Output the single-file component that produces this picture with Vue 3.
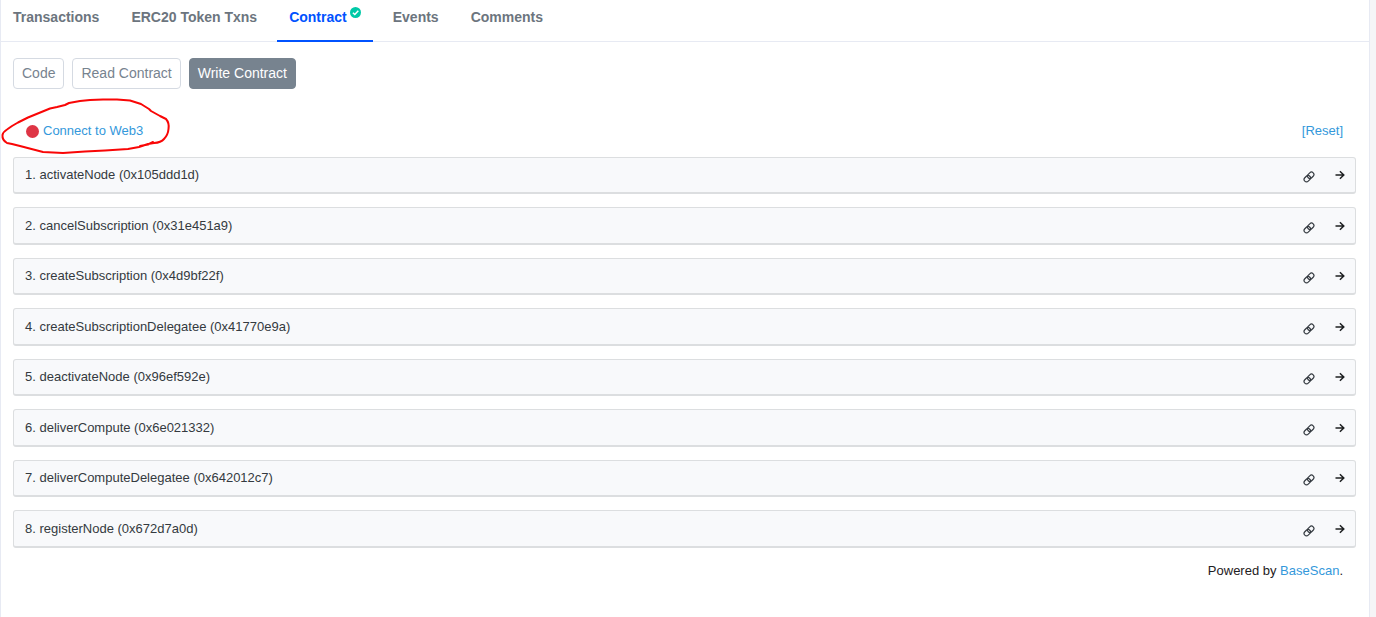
<template>
  <div class="page">
    <main class="card">
      <nav class="tabs">
        <a
          v-for="tab in tabs"
          :key="tab.name"
          href="#"
          class="tab"
          :class="{ 'tab--active': activeTab === tab.name }"
          @click.prevent="activeTab = tab.name"
        >
          {{ tab.name }}
          <svg v-if="tab.verified" class="tab__badge" viewBox="0 0 11 11" aria-hidden="true">
            <circle cx="5.5" cy="5.5" r="5.5" fill="#00c9a7" />
            <path d="M2.9 5.7 4.8 7.5 8.3 3.8" fill="none" stroke="#fff" stroke-width="1.5" />
          </svg>
        </a>
      </nav>

      <div class="content">
        <div class="modes">
          <button
            v-for="mode in modes"
            :key="mode"
            type="button"
            class="mode"
            :class="{ 'mode--active': activeMode === mode }"
            @click="activeMode = mode"
          >
            {{ mode }}
          </button>
        </div>

        <div class="status">
          <a href="#" class="connect" @click.prevent>
            <span class="connect__dot"></span>
            Connect to Web3
          </a>
          <a href="#" @click.prevent>[Reset]</a>
          <svg class="scribble" viewBox="0 0 172 58" aria-hidden="true">
            <path
              d="M7 45Q2 42 2.500 37 3 34 7 31.500L12 28 18 24.500 28 19.500 39 15 50 10.500 57 9 65 7 69 5 80 3 90 2 103 1.500 117 1.500 130 2.500 141 6 149 11 151 13 160 18 166 21Q169.500 25 168.500 31 168 37 164 41 161 44.500 154 45L148 46 139 49 128 51 105 52.500 85 53.500 63 55 43 54 20 48 12 46ZM140 48 148 46.500 153 44"
              fill="none"
              stroke="#f90606"
              stroke-width="2"
              stroke-linejoin="round"
              stroke-linecap="round"
            />
          </svg>
        </div>

        <ol class="methods">
          <li v-for="(method, index) in methods" :key="method.id" class="method">
            <a href="#" class="method__name" @click.prevent>
              {{ index + 1 }}. {{ method.name }} ({{ method.id }})
            </a>
            <a href="#" class="method__link" :aria-label="`Link to ${method.name}`" @click.prevent>
              <svg viewBox="0 0 12 12">
                <g fill="none" stroke="#343a40" stroke-width="1.200">
                  <rect x="4.200" y="1.900" width="7" height="4.800" rx="2.400" transform="rotate(-45 7.700 4.300)" />
                  <rect x="0.800" y="5.300" width="7" height="4.800" rx="2.400" transform="rotate(-45 4.300 7.700)" />
                </g>
              </svg>
            </a>
            <a href="#" class="method__toggle" :aria-label="`Open ${method.name}`" @click.prevent>
              <svg viewBox="0 0 10 10">
                <path d="M0.500 5H8.800M4.900 1.200 8.800 5 4.900 8.800" fill="none" stroke="#1e2022" stroke-width="1.500" />
              </svg>
            </a>
          </li>
        </ol>

        <p class="powered">Powered by <a href="#" @click.prevent>BaseScan</a>.</p>
      </div>
    </main>
  </div>
</template>

<script setup>
import { ref } from 'vue';

const tabs = [
  { name: 'Transactions' },
  { name: 'ERC20 Token Txns' },
  { name: 'Contract', verified: true },
  { name: 'Events' },
  { name: 'Comments' }
];
const activeTab = ref('Contract');

const modes = ['Code', 'Read Contract', 'Write Contract'];
const activeMode = ref('Write Contract');

const methods = [
  { name: 'activateNode', id: '0x105ddd1d' },
  { name: 'cancelSubscription', id: '0x31e451a9' },
  { name: 'createSubscription', id: '0x4d9bf22f' },
  { name: 'createSubscriptionDelegatee', id: '0x41770e9a' },
  { name: 'deactivateNode', id: '0x96ef592e' },
  { name: 'deliverCompute', id: '0x6e021332' },
  { name: 'deliverComputeDelegatee', id: '0x642012c7' },
  { name: 'registerNode', id: '0x672d7a0d' }
];
</script>

<style>
body {
  margin: 0;
  background-color: #f5f5f7;
}
</style>

<style scoped>
.page {
  box-sizing: border-box;
  min-height: 100vh;
  display: flex;
  padding-right: 6px;
  font-family: "Liberation Sans", Arial, sans-serif;
  font-size: 13px;
  line-height: 20px;
  color: #1e2022;
}

a {
  color: #3498db;
  text-decoration: none;
}

.card {
  flex: 1;
  border-left: 1px solid #e7eaf3;
  border-right: 1px solid #e7eaf3;
  background-color: #fff;
}

/* Tabs */
.tabs {
  display: flex;
  gap: 8px;
  border-bottom: 1px solid #e7eaf3;
}

.tab {
  display: flex;
  gap: 3px;
  margin-bottom: -1px;
  padding: 7px 12px 13px;
  border-bottom: 2px solid transparent;
  font-size: 14px;
  font-weight: 700;
  color: #6c757e;
}

.tab--active {
  border-bottom-color: #0052ff;
  color: #0052ff;
}

.tab__badge {
  width: 11px;
  height: 11px;
}

.content {
  padding: 16px 13px 16px 12px;
}

/* Code / Read / Write switch */
.modes {
  display: flex;
  gap: 8px;
}

.mode {
  padding: 4px 8px 5px;
  border: 1px solid #d5dae2;
  border-radius: 4px;
  background-color: #fff;
  font-family: inherit;
  font-size: 14px;
  line-height: 20px;
  color: #77838f;
  cursor: pointer;
}

.mode--active {
  border-color: #77838f;
  background-color: #77838f;
  color: #fff;
}

.status {
  position: relative;
  display: flex;
  justify-content: space-between;
  margin: 32px 13px 16px;
}

.connect {
  display: flex;
  align-items: center;
  gap: 4px;
}

.connect__dot {
  width: 13px;
  height: 13px;
  border-radius: 50%;
  background-color: #de3545;
}

.scribble {
  position: absolute;
  top: -23px;
  left: -26px;
  width: 172px;
  height: 58px;
  pointer-events: none;
}

/* Contract methods */
.methods {
  display: grid;
  gap: 13px;
  margin: 0;
  padding: 0;
  list-style: none;
}

.method {
  box-sizing: border-box;
  height: 37px;
  display: flex;
  align-items: center;
  padding: 0 10px 0 11px;
  border: 1px solid #dcdee0;
  border-bottom-width: 2px;
  border-radius: 3px;
  background-color: #f8f9fb;
}

.method:nth-child(even) {
  height: 38px;
}

.method__name {
  flex: 1;
  color: #343a40;
}

.method__link,
.method__toggle {
  display: flex;
}

.method__link {
  margin-right: 20px;
  padding-top: 4px;
}

.method__link svg {
  width: 12px;
  height: 12px;
}

.method__toggle svg {
  width: 10px;
  height: 10px;
}

.powered {
  margin: 13px 13px 0;
  text-align: right;
}
</style>
